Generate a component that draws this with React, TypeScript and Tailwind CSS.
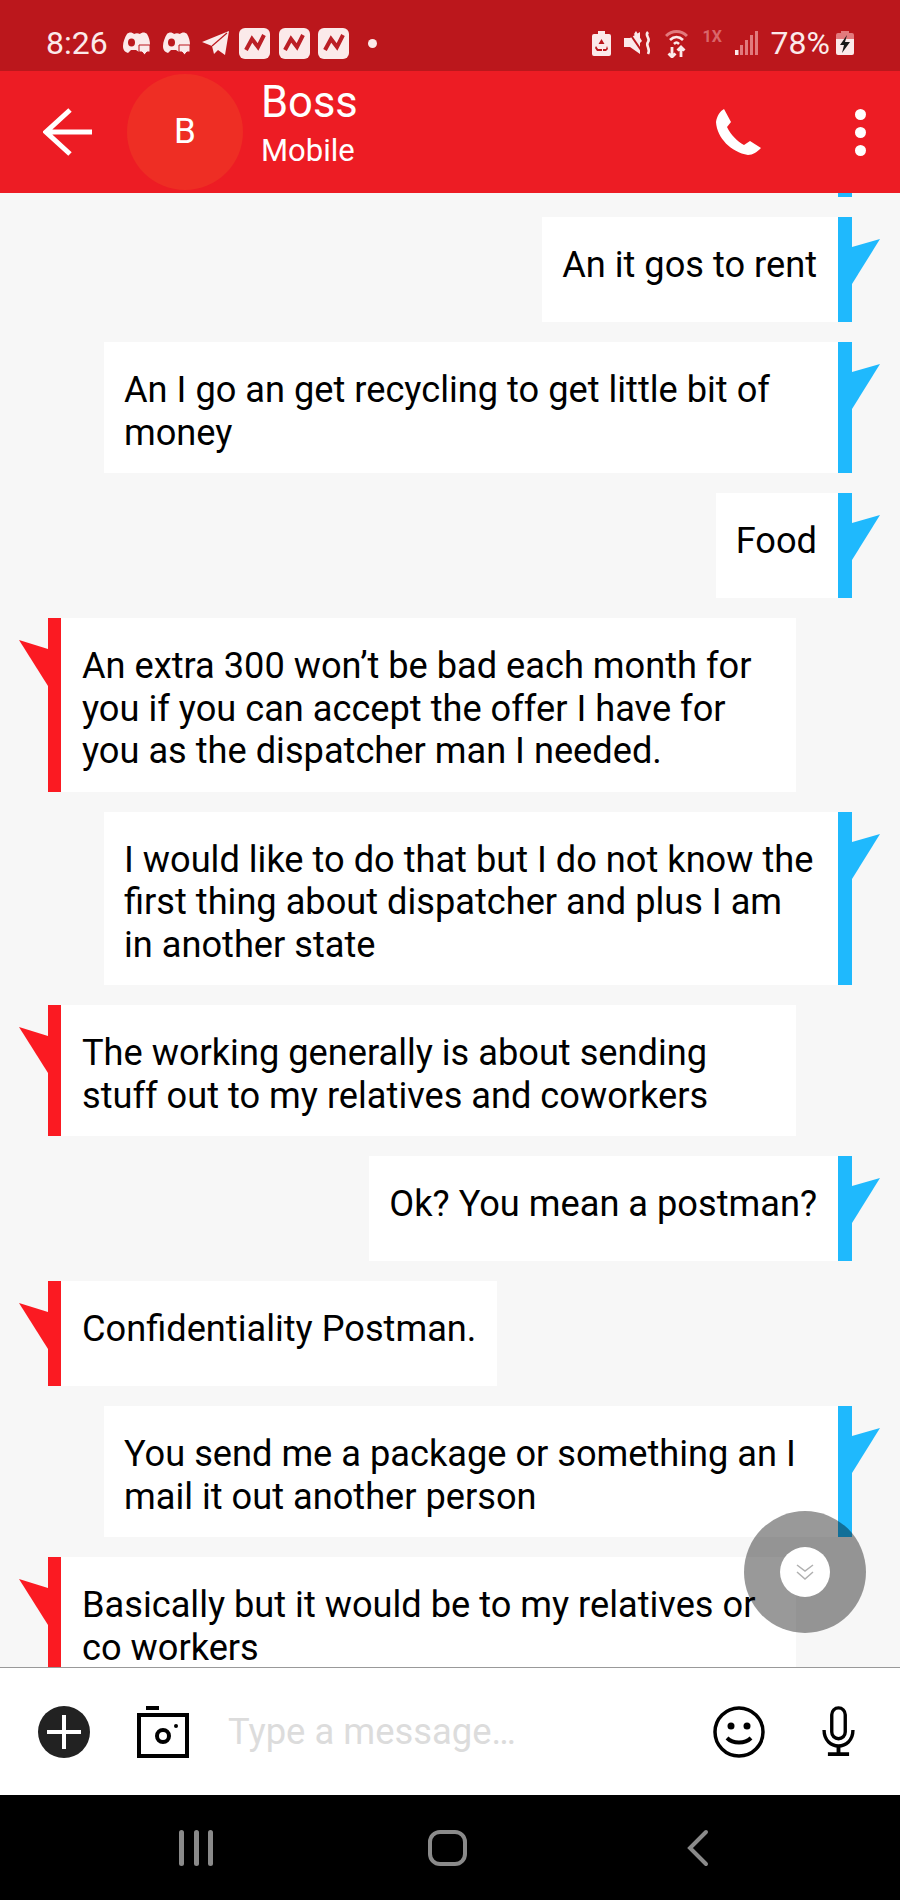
import type { ReactNode } from 'react';

const font = 'font-["Roboto",sans-serif]';

function OutgoingFlag() {
  return (
    <svg width="28" height="70" viewBox="0 0 28 70" className="shrink-0">
      <polygon points="0,30 28,22 0,67" fill="#1fb9fd" />
    </svg>
  );
}

function IncomingFlag() {
  return (
    <svg width="29" height="70" viewBox="0 0 29 70" className="shrink-0">
      <polygon points="29,31 0,22 29,68" fill="#fb1a22" />
    </svg>
  );
}

function Outgoing({ children, minimal }: { children: ReactNode; minimal?: boolean }) {
  return (
    <div className="flex shrink-0 justify-end pr-5">
      <div className={`max-w-[734px] bg-white pb-[19px] pl-[20px] pr-[21px] pt-[27px] ${minimal ? 'min-h-[105px]' : ''}`}>
        <p>{children}</p>
      </div>
      <div className="w-[14px] shrink-0 bg-[#1fb9fd]" />
      <OutgoingFlag />
    </div>
  );
}

function Incoming({ children, minimal }: { children: ReactNode; minimal?: boolean }) {
  return (
    <div className="flex shrink-0 pl-[19px]">
      <IncomingFlag />
      <div className="w-[13px] shrink-0 bg-[#fb1a22]" />
      <div className={`max-w-[735px] bg-white pb-[19px] pl-[21px] pr-[21px] pt-[27px] ${minimal ? 'min-h-[105px]' : ''}`}>
        <p>{children}</p>
      </div>
    </div>
  );
}

function ChatHeadIcon() {
  return (
    <svg width="27" height="23" viewBox="0 0 27 23" fill="#fbeaea" className="shrink-0">
      <path d="M4 2c2-2 5-2 7 0 2-1 4-1 6 0 2-2 5-2 7 0 2 3 3 7 3 11H16v7l-3-2H8l-3 3c-3-1-5-3-5-7C0 10 2 5 4 2z" />
      <ellipse cx="8.500" cy="10.500" rx="3.500" ry="4" fill="#bb171c" />
      <path d="M16 13h11v7h-3l-2.500 3-2.500-3h-3z" stroke="#bb171c" strokeWidth="1" />
    </svg>
  );
}

function BoltTile() {
  return (
    <div className="flex h-[31px] w-[31px] shrink-0 items-center justify-center rounded-[6px] bg-[#fbeaea]">
      <svg width="22" height="20" viewBox="0 0 22 20" fill="none" stroke="#bb1f26" strokeWidth="4">
        <path d="M2 17 8 6l6 8 6-12" />
      </svg>
    </div>
  );
}

export default function App() {
  return (
    <div className={`flex h-[1900px] w-[900px] flex-col overflow-hidden bg-white text-black ${font}`}>
      {/* status bar */}
      <div className="flex h-[71px] shrink-0 items-center bg-[#bb171c] pl-[46px] pr-[46px] pt-[15px] text-[#fbeaea]">
        <span className="w-[63px] text-[32px] leading-none">8:26</span>
        <div className="ml-[14px] flex items-center gap-[13px]">
          <ChatHeadIcon />
          <ChatHeadIcon />
          <svg width="27" height="24" viewBox="0 0 27 24" fill="#fbeaea" className="-ml-[1px] shrink-0">
            <path d="M0 11 27 0l-4 24-7-5-4 4-2-8z" />
            <path d="M25 2 10 15" stroke="#bb171c" strokeWidth="1.2" />
          </svg>
        </div>
        <div className="ml-[10px] flex items-center gap-[8.5px]">
          <BoltTile />
          <BoltTile />
          <BoltTile />
        </div>
        <div className="ml-[19px] h-[9px] w-[9px] rounded-full bg-[#fbeaea]" />
        <div className="ml-auto flex items-center">
          <svg width="19" height="25" viewBox="0 0 19 25" fill="#fbeaea" className="shrink-0">
            <path d="M6 0h7v3h4a2 2 0 0 1 2 2v18a2 2 0 0 1-2 2H2a2 2 0 0 1-2-2V5a2 2 0 0 1 2-2h4z" />
            <path d="M9.500 8l3 5H6.500zM4 15l2 3h4v2H5l-2-3zM15 15l1 3-2 2h-3v-2h3z" fill="#bb171c" />
          </svg>
          <svg width="27" height="24" viewBox="0 0 27 24" className="ml-[13px] shrink-0" fill="#fbeaea">
            <path d="M0 7h6l10-6v22L6 16H0z" />
            <path d="M4 0 19 22" stroke="#bb171c" strokeWidth="2" />
            <path d="M12 0l6 10-2 2-6-9z" />
            <path d="M24 1c-4 4 3 6 0 10s3 6 0 12" fill="none" stroke="#fbeaea" strokeWidth="2.600" />
          </svg>
          <svg width="23" height="29" viewBox="0 0 23 29" className="ml-[14px] shrink-0" fill="none" stroke="#fbeaea">
            <path d="M1 7c6-6 15-6 21 0" strokeWidth="3" stroke="#e27a7d" />
            <path d="M5 11c4-4 9-4 13 0" strokeWidth="2.600" />
            <path d="M9 15c2-2 3-2 5 0" strokeWidth="2.600" />
            <path d="M7 18v10M3.500 24.500 7 28l3.500-3.500M16 28V18m-3.500 3.500L16 18l3.500 3.500" strokeWidth="2.800" />
          </svg>
          <span className="ml-[15px] -mt-[12px] w-[18px] text-[16px] font-bold leading-none text-[#d9666a]">1X</span>
          <svg width="23" height="24" viewBox="0 0 23 24" className="ml-[14px] shrink-0" fill="#e27a7d">
            <rect x="0" y="19" width="3.500" height="5" fill="#fbeaea" />
            <rect x="5" y="14" width="3" height="10" />
            <rect x="10" y="9" width="3" height="15" />
            <rect x="15" y="4" width="3" height="20" />
            <rect x="20" y="0" width="3" height="24" />
          </svg>
          <span className="ml-[13px] text-[32px] leading-none">78%</span>
          <svg width="18" height="24" viewBox="0 0 18 24" className="ml-[6px] shrink-0">
            <path d="M5 0h8v2h3a2 2 0 0 1 2 2v4H0V4a2 2 0 0 1 2-2h3z" fill="#e27a7d" />
            <path d="M0 8h18v14a2 2 0 0 1-2 2H2a2 2 0 0 1-2-2z" fill="#fbeaea" />
            <path d="M11 4 4 14h4l-2 8 8-11H9z" fill="#1a1a1a" />
          </svg>
        </div>
      </div>

      {/* conversation header */}
      <div className="flex h-[122px] shrink-0 items-center bg-[#ed1c24] pl-[43px] pr-[34px] text-white">
        <svg width="50" height="50" viewBox="0 0 50 50" fill="none" stroke="white" strokeWidth="5" className="shrink-0">
          <path d="M49 25H3M27 3 3 25l24 22" />
        </svg>
        <div className="ml-[34px] flex h-[116px] w-[116px] shrink-0 items-center justify-center rounded-full bg-[#ee2e24] text-[35px]">
          B
        </div>
        <div className="ml-[18px] flex flex-col self-start pt-[6px]">
          <span className="text-[43.5px] leading-[52px]">Boss</span>
          <span className="text-[31px] leading-[44px]">Mobile</span>
        </div>
        <svg width="46" height="48" viewBox="0 0 46 48" fill="white" className="ml-auto shrink-0">
          <path d="M8 1l7 13-4 5c4 8 10 14 17 18l6-4 11 7c-4 4-8 7-13 7C15 44 1 30 0 14 1 8 4 3 8 1z" />
        </svg>
        <div className="ml-[93px] flex flex-col gap-[7px]">
          <div className="h-[11px] w-[11px] rounded-full bg-white" />
          <div className="h-[11px] w-[11px] rounded-full bg-white" />
          <div className="h-[11px] w-[11px] rounded-full bg-white" />
        </div>
      </div>

      {/* messages */}
      <div className="relative min-h-0 flex-1 overflow-hidden bg-[#f7f7f7]">
        <div className="flex h-full flex-col gap-5 text-[36.2px] leading-[42.5px]">
          <div className="flex h-[4px] shrink-0 justify-end pr-[48px]">
            <div className="w-[14px] bg-[#1fb9fd]" />
          </div>
          <Outgoing minimal>An it gos to rent</Outgoing>
          <Outgoing>An I go an get recycling to get little bit of money</Outgoing>
          <Outgoing minimal>Food</Outgoing>
          <Incoming>An extra 300 won’t be bad each month for you if you can accept the offer I have for you as the dispatcher man I needed.</Incoming>
          <Outgoing>I would like to do that but I do not know the first thing about dispatcher and plus I am in another state</Outgoing>
          <Incoming>The working generally is about sending stuff out to my relatives and coworkers</Incoming>
          <Outgoing minimal>Ok? You mean a postman?</Outgoing>
          <Incoming minimal>Confidentiality Postman.</Incoming>
          <Outgoing>You send me a package or something an I mail it out another person</Outgoing>
          <Incoming>Basically but it would be to my relatives or co workers</Incoming>
        </div>
        {/* jump to latest */}
        <div className="absolute left-[744px] top-[1318px] flex h-[122px] w-[122px] items-center justify-center rounded-full bg-black/40">
          <div className="flex h-[50px] w-[50px] items-center justify-center rounded-full bg-white">
            <svg width="18" height="18" viewBox="0 0 18 18" fill="none" stroke="#b0b0b0" strokeWidth="1.500">
              <path d="M1 2l8 6 8-6M1 9l8 7 8-7" />
            </svg>
          </div>
        </div>
      </div>

      {/* composer */}
      <div className="flex h-[128px] shrink-0 items-center border-t border-[#999] bg-white pl-[38px] pr-[45px]">
        <svg width="52" height="52" viewBox="0 0 52 52" className="shrink-0">
          <circle cx="26" cy="26" r="26" fill="#222" />
          <path d="M9 26h34M26 9v34" stroke="white" strokeWidth="4" />
        </svg>
        <svg width="52" height="52" viewBox="0 0 52 52" fill="none" stroke="black" className="ml-[47px] shrink-0">
          <path d="M9 2h13" strokeWidth="4" />
          <rect x="2" y="9" width="48" height="41" strokeWidth="4" />
          <circle cx="26" cy="30" r="6" strokeWidth="4" />
          <circle cx="39" cy="20" r="2" fill="black" stroke="none" />
        </svg>
        <span className="ml-[39px] pt-[2px] text-[36.4px] text-[#dcdcdc]">Type a message…</span>
        <svg width="52" height="52" viewBox="0 0 52 52" fill="none" stroke="black" strokeWidth="3.500" className="ml-auto shrink-0">
          <circle cx="26" cy="26" r="24" />
          <circle cx="18" cy="20" r="3.500" fill="black" stroke="none" />
          <circle cx="34" cy="20" r="3.500" fill="black" stroke="none" />
          <path d="M14 32c6 6 18 6 24 0" strokeWidth="4" />
        </svg>
        <svg width="33" height="52" viewBox="0 0 34 54" fill="none" stroke="black" strokeWidth="3.500" className="ml-[57px] shrink-0">
          <rect x="10" y="2" width="14" height="32" rx="7" />
          <path d="M2 25c0 22 30 22 30 0" />
          <path d="M17 42v8M6 50h22" strokeWidth="4" />
        </svg>
      </div>

      {/* android nav */}
      <div className="flex h-[105px] shrink-0 items-center bg-black pl-[179px] pr-[191px]">
        <div className="flex gap-[9.5px]">
          <div className="h-[36px] w-[5px] rounded-full bg-[#8a8a8a]" />
          <div className="h-[36px] w-[5px] rounded-full bg-[#8a8a8a]" />
          <div className="h-[36px] w-[5px] rounded-full bg-[#8a8a8a]" />
        </div>
        <div className="ml-[215px] h-[36px] w-[39px] rounded-[12px] border-[4px] border-[#8a8a8a]" />
        <svg width="24" height="38" viewBox="0 0 24 38" fill="none" stroke="#8a8a8a" strokeWidth="4" strokeLinecap="round" className="ml-auto">
          <path d="M21 3 5 19l16 16" />
        </svg>
      </div>
    </div>
  );
}
